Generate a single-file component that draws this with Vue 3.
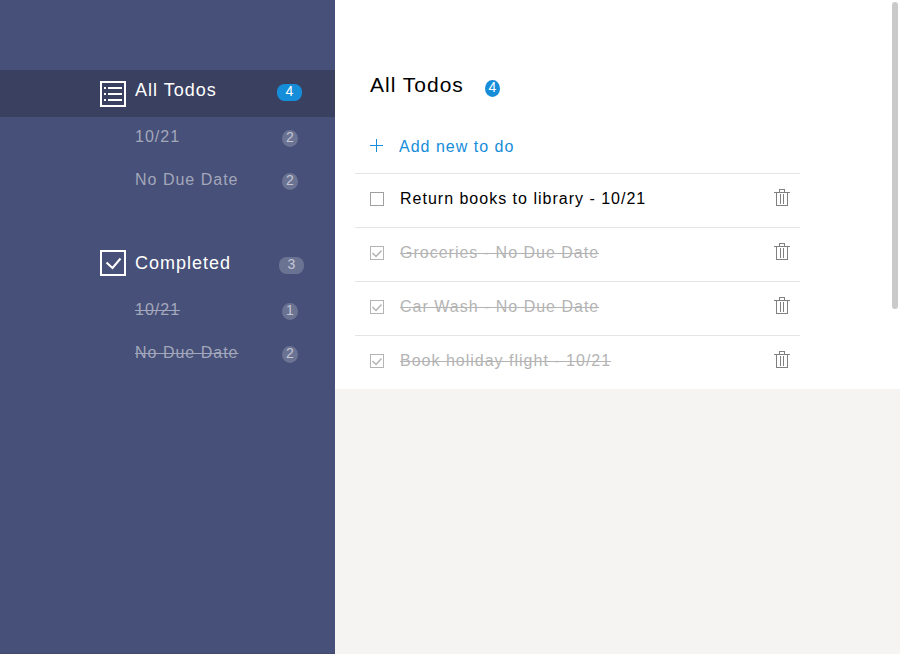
<script setup>
import { ref, computed } from 'vue'

const todos = ref([
  { id: 1, title: 'Return books to library', due: '10/21', done: false },
  { id: 2, title: 'Groceries', due: 'No Due Date', done: true },
  { id: 3, title: 'Car Wash', due: 'No Due Date', done: true },
  { id: 4, title: 'Book holiday flight', due: '10/21', done: true }
])

const completed = computed(() => todos.value.filter(t => t.done))

function groupByDue(list) {
  return ['10/21', 'No Due Date'].map(label => ({
    label,
    count: list.filter(t => t.due === label).length
  }))
}

const allGroups = computed(() => groupByDue(todos.value))
const doneGroups = computed(() => groupByDue(completed.value))

function remove(id) {
  todos.value = todos.value.filter(t => t.id !== id)
}
</script>

<template>
  <div class="app">
    <nav class="sidebar">
      <section class="group">
        <a href="#all" class="head active">
          <svg class="icon" width="26" height="26" viewBox="0 0 26 26" shape-rendering="crispEdges">
            <rect x="1" y="1" width="24" height="24" fill="none" stroke="#fff" stroke-width="2" />
            <path d="M4 6h2v2h-2zM8 6h14v2h-14zM4 12h2v2h-2zM8 12h14v2h-14zM4 18h2v2h-2zM8 18h14v2h-14z" fill="#fff" />
          </svg>
          <span class="label">All Todos</span>
          <span class="pill blue">{{ todos.length }}</span>
        </a>
        <a v-for="g in allGroups" :key="g.label" href="#all" class="sub">
          <span class="label">{{ g.label }}</span>
          <span class="dot">{{ g.count }}</span>
        </a>
      </section>

      <section class="group">
        <a href="#completed" class="head done">
          <svg class="icon" width="26" height="26" viewBox="0 0 26 26">
            <rect x="1" y="1" width="24" height="24" fill="none" stroke="#fff" stroke-width="2" />
            <path d="M6.500 12.500L12.500 18L20.500 8.500" fill="none" stroke="#fff" stroke-width="2" />
          </svg>
          <span class="label">Completed</span>
          <span class="pill">{{ completed.length }}</span>
        </a>
        <a v-for="g in doneGroups" :key="g.label" href="#completed" class="sub struck">
          <span class="label">{{ g.label }}</span>
          <span class="dot">{{ g.count }}</span>
        </a>
      </section>
    </nav>

    <main class="main">
      <div class="panel">
        <header class="title">
          <h1>All Todos</h1>
          <span class="dot blue">{{ todos.length }}</span>
        </header>

        <button type="button" class="add">
          <svg width="13" height="15" viewBox="0 0 13 15" shape-rendering="crispEdges">
            <path d="M0 6h13v1h-13zM6 0h1v13h-1z" fill="currentColor" />
          </svg>
          <span>Add new to do</span>
        </button>

        <ul class="list">
          <li v-for="t in todos" :key="t.id" class="item" :class="{ finished: t.done }">
            <span class="check">
              <input :id="'todo-' + t.id" v-model="t.done" type="checkbox" />
              <svg v-if="t.done" width="14" height="14" viewBox="0 0 14 14">
                <path d="M2.500 7L6 10.500L11.500 4.500" fill="none" stroke="#b4b4b4" stroke-width="1.500" />
              </svg>
            </span>
            <label :for="'todo-' + t.id">{{ t.title }} - {{ t.due }}</label>
            <button type="button" class="trash" :aria-label="'Delete ' + t.title" @click="remove(t.id)">
              <svg width="16" height="17" viewBox="0 0 16 17" shape-rendering="crispEdges">
                <path d="M5 0h6v1h-6zM5 0h1v3h-1zM10 0h1v3h-1zM0 3h16v1h-16zM2 3h1v14h-1zM13 3h1v14h-1zM2 16h12v1h-12zM6 5h1v10h-1zM9 5h1v10h-1z" fill="#808080" />
              </svg>
            </button>
          </li>
        </ul>
      </div>
    </main>

    <div class="scroll-thumb"></div>
  </div>
</template>

<style>
body {
  background: #f5f4f3;
}
</style>

<style scoped>
.app {
  display: flex;
  min-height: 100vh;
  font-family: "Liberation Sans", Helvetica, sans-serif;
  font-size: 16px;
  letter-spacing: 1px;
  color: #000;
}

.sidebar {
  box-sizing: border-box;
  flex: 0 0 335px;
  display: flex;
  flex-direction: column;
  gap: 40px;
  padding-top: 70px;
  background: #475078;
  border-bottom: 1px solid #42496a;
}

.head,
.sub {
  box-sizing: border-box;
  display: flex;
  align-items: flex-start;
  color: #fff;
  text-decoration: none;
}

.head {
  height: 47px;
  padding: 10px 33px 0 100px;
  gap: 9px;
  font-size: 18px;
  line-height: 20px;
}

.head.active {
  background: #3a405f;
}

.head.active .icon {
  margin-top: 1px;
}

.head.done {
  padding: 7px 31px 0 100px;
}

.head.done .label {
  margin-top: 3px;
}

.head.done .pill {
  margin-top: 7px;
}

.label {
  flex: 1;
}

.pill,
.dot {
  height: 17px;
  font-size: 14px;
  line-height: 15px;
  letter-spacing: 0;
  text-align: center;
  background: rgba(255, 255, 255, 0.2);
  color: #c3c6d3;
}

.pill {
  width: 25px;
  margin-top: 4px;
  border-radius: 30% / 45%;
}

.dot {
  width: 16px;
  border-radius: 50%;
}

.pill.blue,
.dot.blue {
  background: #168dd9;
  color: #fff;
}

.sub {
  height: 43px;
  padding: 10px 37px 0 135px;
  line-height: 20px;
  color: #a3a7bb;
}

.sub .dot {
  margin-top: 3px;
}

.struck .label {
  text-decoration: line-through;
}

.main {
  flex: 1;
  min-width: 0;
}

.panel {
  padding: 72px 100px 0 20px;
  background: #fff;
}

.title {
  display: flex;
  align-items: flex-start;
  gap: 21px;
  padding-left: 15px;
}

.title h1 {
  margin: 0;
  font-size: 21px;
  font-weight: 400;
  line-height: 26px;
}

.title .dot {
  width: 15px;
  margin-top: 8px;
}

.add {
  display: flex;
  align-items: center;
  gap: 16px;
  margin: 37px 0 15px;
  padding: 0 15px;
  border: 0;
  background: none;
  font: inherit;
  line-height: 23px;
  letter-spacing: 1px;
  color: #168dd9;
  cursor: pointer;
}

.list {
  margin: 0;
  padding: 0;
  list-style: none;
}

.item {
  box-sizing: border-box;
  display: flex;
  align-items: center;
  gap: 16px;
  height: 54px;
  padding: 0 10px 3px 15px;
  border-top: 1px solid #e5e5e5;
}

.item label {
  flex: 1;
  line-height: 20px;
}

.finished label {
  color: #b4b4b4;
  text-decoration: line-through;
}

.check {
  display: grid;
}

.check > * {
  grid-area: 1 / 1;
}

.check svg {
  pointer-events: none;
}

.check input {
  appearance: none;
  box-sizing: border-box;
  width: 14px;
  height: 14px;
  margin: 0;
  border: 1px solid #a0a0a0;
}

.finished .check input {
  border-color: #b4b4b4;
}

.trash {
  display: flex;
  padding: 0 0 3px;
  border: 0;
  background: none;
  cursor: pointer;
}

.scroll-thumb {
  position: fixed;
  top: 2px;
  right: 2px;
  width: 6px;
  height: 47vh;
  border-radius: 3px;
  background: #cacaca;
}
</style>
